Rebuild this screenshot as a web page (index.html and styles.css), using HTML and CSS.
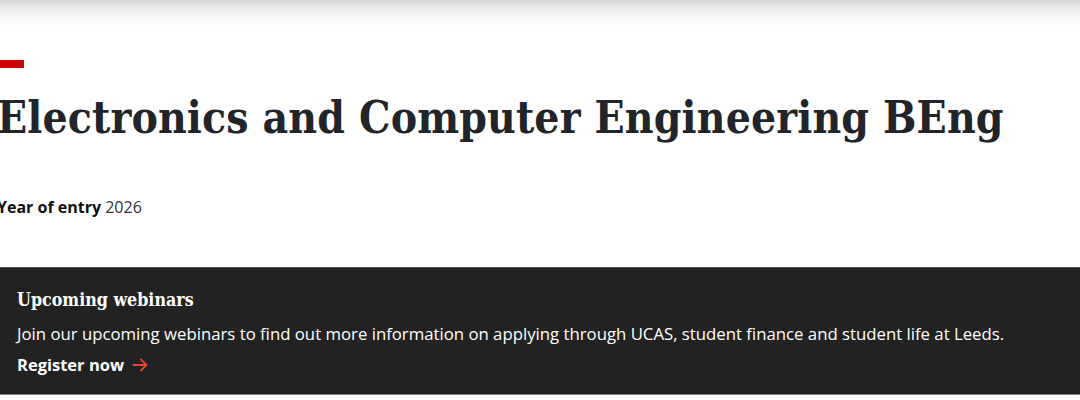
FILE: index.html
```html
<!DOCTYPE html>
<html lang="en">
<head>
<meta charset="utf-8">
<title>Electronics and Computer Engineering BEng</title>
<link rel="stylesheet" href="styles.css">
</head>
<body>
<div class="topshadow"></div>
<header class="course-header">
  <span class="accent"></span>
  <h1 class="title">Electronics and Computer Engineering BEng</h1>
  <p class="entry"><strong>Year of entry</strong> 2026</p>
</header>
<section class="webinars">
  <h2 class="webinars-title">Upcoming webinars</h2>
  <p class="webinars-text">Join our upcoming webinars to find out more information on applying through UCAS, student finance and student life at Leeds.</p>
  <a class="register" href="#">Register now <svg class="arrow" width="16" height="14" viewBox="0 0 16 14" aria-hidden="true"><path d="M1 7H14.5M8.5 1L14.5 7L8.5 13" fill="none" stroke="#e8462e" stroke-width="1.8"/></svg></a>
</section>
</body>
</html>
```

FILE: styles.css
```css
* { box-sizing: border-box; }
html, body { margin: 0; padding: 0; background: #fff; }
body { font-family: "Open Sans", "Liberation Sans", sans-serif; color: #212529; width: 1080px; overflow: hidden; }
.topshadow { height: 26px; background: linear-gradient(to bottom, #d6d6d6 0%, #eeeeee 35%, #ffffff 100%); }
.course-header { margin-left: -3px; padding-top: 34px; height: 241px; }
.accent { display: block; width: 27px; height: 8px; background: #d00000; }
.title { margin: 20px 0 0 0; font-family: "DejaVu Serif", serif; font-stretch: condensed; font-weight: 700; font-size: 44px; line-height: 60px; color: #212529; letter-spacing: 0.13px; }
.entry { margin: 47px 0 0 0; font-size: 16px; line-height: 24px; color: #333; }
.entry strong { color: #111; }
.webinars { background: #222222; border-top: 1px solid #555; border-bottom: 1px solid #888; padding: 20px 17px 16px; color: #fff; }
.webinars-title { margin: 0; font-family: "DejaVu Serif", serif; font-stretch: condensed; font-weight: 700; font-size: 17.7px; line-height: 24px; }
.webinars-text { margin: 9px 0 0 0; font-size: 16.75px; line-height: 26px; }
.register { display: inline-flex; align-items: center; gap: 8px; margin-top: 5px; color: #fff; text-decoration: none; font-weight: 700; font-size: 16.5px; line-height: 26px; }
.arrow { display: block; }
```
